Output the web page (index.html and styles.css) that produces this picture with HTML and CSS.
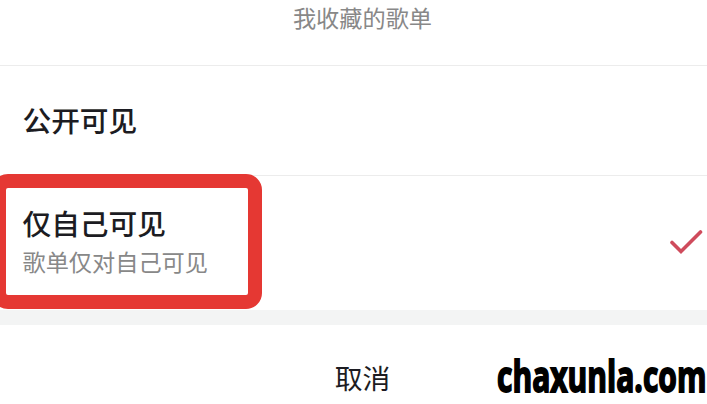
FILE: index.html
```
<!DOCTYPE html>
<html lang="zh-Hans">
<head>
  <meta charset="UTF-8" />
  <title>我收藏的歌单</title>
  <link rel="stylesheet" href="styles.css">
</head>
<body>
  <div class="sheet">
    <div class="sheet-title">我收藏的歌单</div>
    <div class="option public">
      <div class="name">公开可见</div>
    </div>
    <div class="option private">
      <div class="texts">
        <div class="name">仅自己可见</div>
        <div class="desc">歌单仅对自己可见</div>
      </div>
      <svg class="check" width="34" height="26" viewBox="0 0 34 26">
        <path d="M3 13.5 L12 22.5 L31.5 3" />
      </svg>
      <div class="highlight"></div>
    </div>
    <div class="gap"></div>
    <div class="cancel">取消</div>
  </div>
  <div class="watermark">chaxunla.com</div>
</body>
</html>
```
FILE: styles.css
```
body {
  margin: 0;
  overflow: hidden;
  background: #fff;
  font-family: "Noto Sans CJK SC", sans-serif;
  color: #1c1c22;
}
.sheet {
  display: flex;
  flex-direction: column;
  height: 404px;
}
.sheet-title {
  box-sizing: border-box;
  height: 66px;
  padding-top: 1px;
  padding-left: 18px;
  border-bottom: 1px solid #ececec;
  text-align: center;
  font-size: 23.2px;
  line-height: 32px;
  color: #888;
}
.option {
  box-sizing: border-box;
  display: flex;
  align-items: center;
  padding-left: 22.5px;
}
.public {
  height: 110px;
  padding-bottom: 2px;
  border-bottom: 1px solid #ececec;
}
.private {
  position: relative;
  height: 134px;
  justify-content: space-between;
  padding-right: 4px;
}
.texts {
  padding-bottom: 4px;
}
.name {
  font-size: 28.7px;
  font-weight: 500;
  line-height: 40px;
}
.desc {
  font-size: 23.2px;
  line-height: 36px;
  color: #888;
}
.check {
  margin-bottom: 2px;
}
.check path {
  fill: none;
  stroke: #cf4b5c;
  stroke-width: 3.6;
  stroke-linecap: round;
}
.highlight {
  position: absolute;
  box-sizing: border-box;
  left: -8px;
  top: -2px;
  width: 270px;
  height: 135px;
  border: 14px solid #e53833;
  border-radius: 16px;
}
.gap {
  height: 15px;
  background: #f3f4f4;
}
.cancel {
  padding: 32px 0 0 18px;
  text-align: center;
  font-size: 27.8px;
  line-height: 40px;
}
.watermark {
  position: absolute;
  left: 497px;
  top: 351px;
  font-family: "Open Sans", sans-serif;
  font-size: 42.5px;
  font-weight: 700;
  line-height: 50px;
  color: #000;
  -webkit-text-stroke: 1.8px #000;
  transform: scaleX(0.706);
  transform-origin: left;
}
```
